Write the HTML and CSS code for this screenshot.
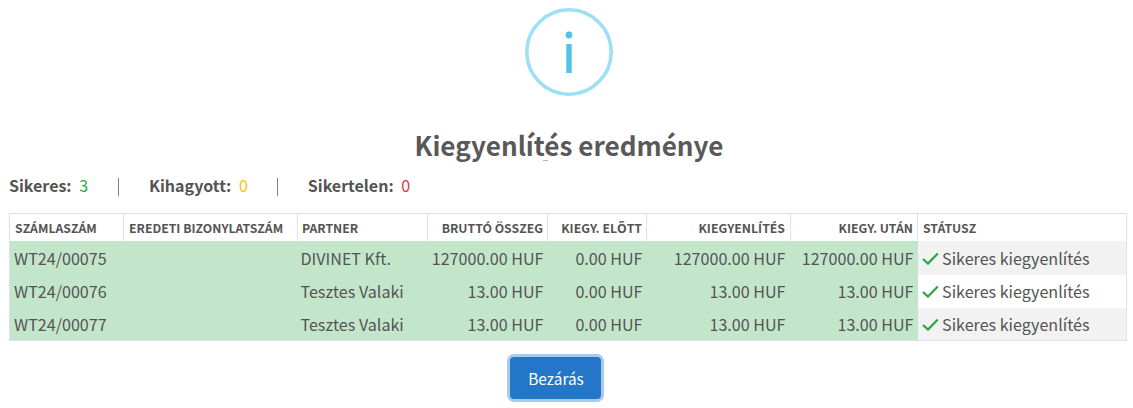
FILE: index.html
```html
<!DOCTYPE html>
<html lang="hu">
<head>
<meta charset="utf-8">
<title>Kiegyenlítés eredménye</title>
<link rel="stylesheet" href="styles.css">
</head>
<body>
<div class="modal">
  <div class="icon-wrap">
    <svg class="info-icon" width="88" height="88" viewBox="0 0 88 88" aria-hidden="true">
      <circle class="ring" cx="44" cy="44" r="42.2"/>
      <circle class="dot" cx="44" cy="27" r="3.4"/>
      <rect class="bar" x="41.3" y="36" width="5.4" height="29"/>
    </svg>
  </div>
  <div class="title-wrap">
    <h2 class="title">Kiegyenlítés eredménye</h2>
    <span class="speck"></span>
  </div>
  <div class="summary">
    <span class="stat"><b>Sikeres:</b> <span class="ok">3</span></span>
    <span class="sep"></span>
    <span class="stat"><b>Kihagyott:</b> <span class="warn">0</span></span>
    <span class="sep tight"></span>
    <span class="stat"><b>Sikertelen:</b> <span class="err">0</span></span>
  </div>
  <table class="results">
    <colgroup>
      <col class="c1"><col class="c2"><col class="c3"><col class="c4"><col class="c5"><col class="c6"><col class="c7"><col class="c8">
    </colgroup>
    <thead>
      <tr>
        <th>SZÁMLASZÁM</th><th>EREDETI BIZONYLATSZÁM</th><th class="tight-left">PARTNER</th>
        <th class="num">BRUTTÓ ÖSSZEG</th><th class="num">KIEGY. ELŐTT</th><th class="num wide-right">KIEGYENLÍTÉS</th><th class="num">KIEGY. UTÁN</th><th>STÁTUSZ</th>
      </tr>
    </thead>
    <tbody>
      <tr class="r1">
        <td>WT24/00075</td><td></td><td class="tight-left">DIVINET Kft.</td>
        <td class="num">127000.00 HUF</td><td class="num">0.00 HUF</td><td class="num wide-right">127000.00 HUF</td><td class="num">127000.00 HUF</td>
        <td class="status"><svg class="check" width="17" height="13" viewBox="0 0 17 13"><path d="M1 7 L6 11.6 L15.8 1.4"/></svg> Sikeres kiegyenlítés</td>
      </tr>
      <tr class="r2">
        <td>WT24/00076</td><td></td><td class="tight-left">Tesztes Valaki</td>
        <td class="num">13.00 HUF</td><td class="num">0.00 HUF</td><td class="num wide-right">13.00 HUF</td><td class="num">13.00 HUF</td>
        <td class="status"><svg class="check" width="17" height="13" viewBox="0 0 17 13"><path d="M1 7 L6 11.6 L15.8 1.4"/></svg> Sikeres kiegyenlítés</td>
      </tr>
      <tr class="r3">
        <td>WT24/00077</td><td></td><td class="tight-left">Tesztes Valaki</td>
        <td class="num">13.00 HUF</td><td class="num">0.00 HUF</td><td class="num wide-right">13.00 HUF</td><td class="num">13.00 HUF</td>
        <td class="status"><svg class="check" width="17" height="13" viewBox="0 0 17 13"><path d="M1 7 L6 11.6 L15.8 1.4"/></svg> Sikeres kiegyenlítés</td>
      </tr>
    </tbody>
  </table>
  <div class="actions"><button class="close" type="button">Bezárás</button></div>
</div>
</body>
</html>
```
FILE: styles.css
```css
* { box-sizing: border-box; }
html, body { margin: 0; padding: 0; background: #fff; overflow: hidden; }
body { font-family: "Noto Sans CJK SC", "Noto Sans", sans-serif; color: #545454; }
.modal { width: 1133px; height: 408px; padding: 8px 7px 0 9px; }
.icon-wrap { display: flex; justify-content: center; padding-left: 3px; height: 88px; }
.info-icon { display: block; }
.ring { fill: none; stroke: #9de0f6; stroke-width: 3.6px; }
.dot { fill: #4fc3ea; }
.bar { fill: #4fc3ea; }
.title-wrap { position: relative; height: 72px; padding-top: 33px; padding-left: 3px; }
.title { margin: 0; text-align: center; font-size: 26.1px; line-height: 32px; font-weight: 700; color: #595959; }
.speck { position: absolute; left: 534px; top: 64px; width: 5px; height: 1px; background: #b5b5b5; }
.summary { display: flex; align-items: center; height: 18px; margin-top: 8px; font-size: 16px; line-height: 18px; }
.stat b { font-weight: 700; margin-right: 4px; }
.sep { width: 1px; height: 18px; margin: 3px 30px 0 30px; background: #808080; }
.sep.tight { margin-left: 29px; }
.ok { color: #28a745; }
.warn { color: #ffc107; }
.err { color: #dc3545; }
.results { margin-top: 19px; width: 1117px; table-layout: fixed; border-collapse: collapse; border: 1px solid #dee2e6; }
.c1 { width: 114px; } .c2 { width: 174px; } .c3 { width: 130px; } .c4 { width: 120px; }
.c5 { width: 99px; } .c6 { width: 144px; } .c7 { width: 127px; } .c8 { width: 209px; }
th { height: 27px; padding: 1px 4px 0 5px; font-size: 12.25px; line-height: 16px; font-weight: 700; text-align: left; white-space: nowrap; border: 1px solid #dee2e6; border-bottom-width: 0; background: #fff; color: #545454; }
td { padding: 0 4px; font-size: 16.1px; line-height: 20px; white-space: nowrap; background: #c3e6cb; border: 0; }
.r1 td { height: 34px; }
.r2 td, .r3 td { height: 33px; }
.num { text-align: right; }
th.tight-left { padding-left: 4px; }
td.tight-left { padding-left: 3px; }
.wide-right { padding-right: 5px; }
td.status { background: #fff; }
.r1 td.status, .r3 td.status { background: #f2f2f2; }
.check { display: inline-block; vertical-align: 0; fill: none; stroke: #28a745; stroke-width: 2.2px; }
.actions { display: flex; justify-content: center; padding-top: 13px; padding-right: 24px; }
.close { width: 97px; height: 48px; border: 3px solid #a9cbea; border-radius: 7px; background: #2476c8; color: #fff; padding: 0 0 0 1px; font: 400 15.4px/20px "Noto Sans CJK SC", sans-serif; }
```
